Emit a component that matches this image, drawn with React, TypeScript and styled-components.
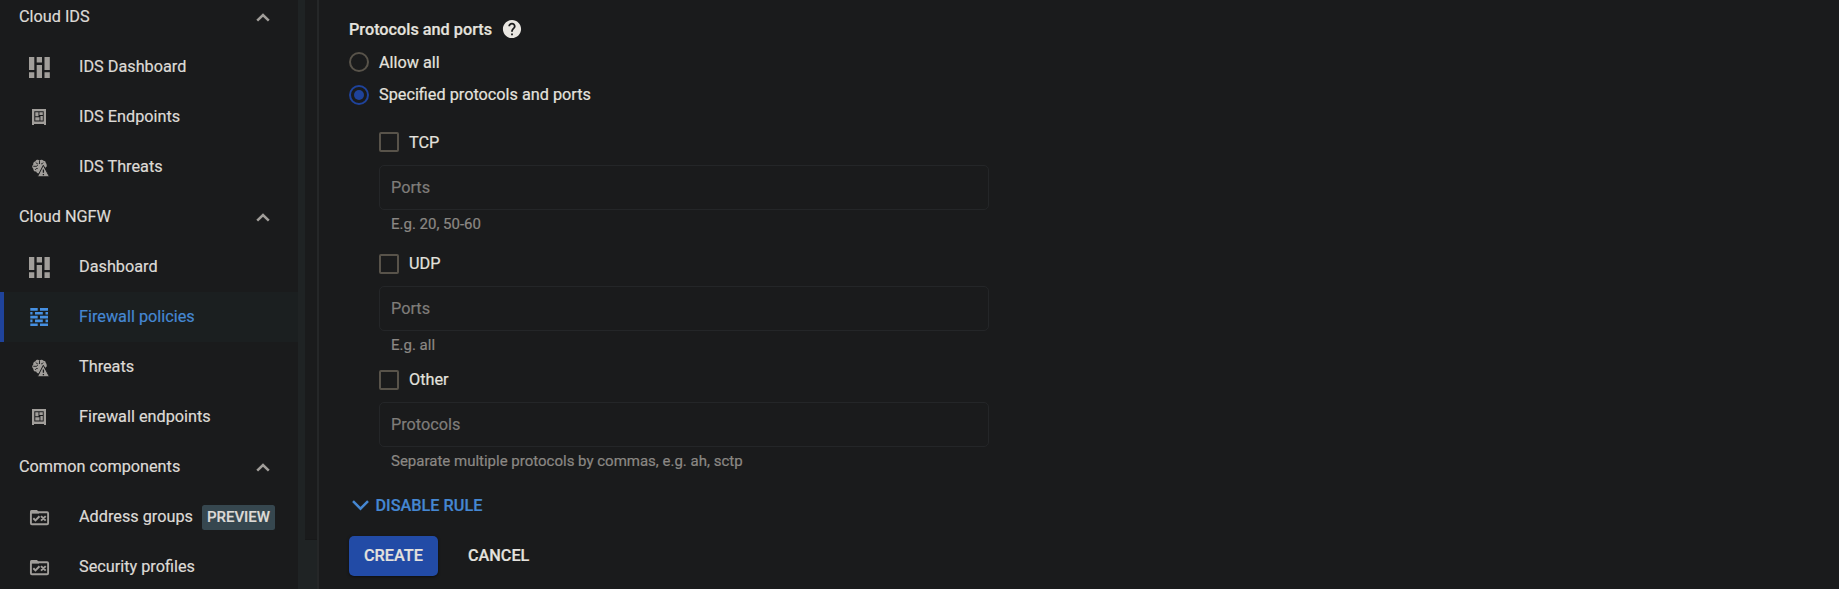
import React from "react";
import styled, { createGlobalStyle } from "styled-components";

const GlobalStyle = createGlobalStyle`
  * { box-sizing: border-box; }
  html, body { margin: 0; background: #1a1b1c; overflow: hidden; }
  button { font: inherit; }
`;

const Page = styled.div`
  display: flex;
  height: 589px;
  overflow: hidden;
  background: #1a1b1c;
  color: #e4e2de;
  font-family: Roboto, sans-serif;
  font-size: 16.25px;
  line-height: 20px;
  -webkit-text-stroke: 0.2px currentColor;
`;

const Sidebar = styled.nav`
  width: 298px;
  flex: none;
  margin-top: -8px;
`;

const SectionHeader = styled.div`
  display: flex;
  align-items: center;
  justify-content: space-between;
  height: 50px;
  padding: 0 28px 0 19px;
  color: #dddad6;
`;

const NavItem = styled.a<{ $active?: boolean }>`
  display: flex;
  align-items: center;
  height: 50px;
  padding-left: ${(p) => (p.$active ? 21 : 25)}px;
  border-left: ${(p) => (p.$active ? "4px solid #1f439b" : "0")};
  background: ${(p) => (p.$active ? "#1b1f20" : "transparent")};
  color: ${(p) => (p.$active ? "#4587d2" : "#dddad6")};
`;

const IconSlot = styled.span<{ $active?: boolean }>`
  display: flex;
  width: 28px;
  margin-right: 26px;
  color: ${(p) => (p.$active ? "#4690e2" : "#a19e9a")};
`;

const Badge = styled.span`
  height: 25px;
  margin-left: 9px;
  padding: 0 5px;
  border-radius: 2.5px;
  background: #36474f;
  font-size: 15px;
  line-height: 24px;
  font-weight: 500;
`;

const ScrollTrack = styled.div`
  flex: none;
  width: 21px;
  padding-left: 7px;
  border-right: 2px solid #252728;
  background: #1f2324;
`;

const ScrollThumb = styled.div`
  height: 540px;
  background: #1a1b1c;
  border-bottom: 1px solid #171819;
`;

const Content = styled.main`
  flex: 1;
  padding: 19px 0 0 30px;
`;

const Title = styled.div`
  display: flex;
  align-items: center;
  gap: 9.5px;
  height: 20px;
  font-weight: 500;
`;

const Option = styled.label<{ $top: number }>`
  display: flex;
  align-items: center;
  gap: 10px;
  height: 20px;
  margin-top: ${(p) => p.$top}px;
`;

const LowLabel = styled.span`
  padding-top: 2px;
`;

const Radio = styled.span<{ $checked?: boolean }>`
  display: flex;
  align-items: center;
  justify-content: center;
  width: 20px;
  height: 20px;
  border: 2px solid ${(p) => (p.$checked ? "#1f439b" : "#58534a")};
  border-radius: 50%;
  &::after {
    content: "";
    width: 10px;
    height: 10px;
    border-radius: 50%;
    background: ${(p) => (p.$checked ? "#1f439b" : "transparent")};
  }
`;

const Checkbox = styled.span`
  width: 20px;
  height: 20px;
  border: 2px solid #58534a;
  border-radius: 2px;
`;

const Group = styled.div`
  width: 610px;
  margin-left: 30px;
`;

const Field = styled.div<{ $gap: number }>`
  height: 45px;
  margin-top: ${(p) => p.$gap}px;
  padding: 0 11px;
  border: 1px solid #242628;
  border-radius: 5px;
  line-height: 43px;
  color: #7f7d7a;
`;

const Hint = styled.div`
  height: 20px;
  margin-top: 4px;
  padding-left: 12px;
  font-size: 15px;
  line-height: 20px;
  color: #8b8884;
`;

const Expander = styled.div`
  display: flex;
  align-items: center;
  gap: 7px;
  height: 20px;
  margin-top: 24px;
  padding-left: 2.5px;
  color: #4587d2;
  font-weight: 500;
`;

const Actions = styled.div`
  display: flex;
  margin-top: 21px;
`;

const Button = styled.button<{ $primary?: boolean }>`
  height: 40px;
  padding: 0 15px;
  border: 0;
  border-radius: 5px;
  font-weight: 500;
  color: #e4e2de;
  background: ${(p) => (p.$primary ? "#224ba6" : "transparent")};
  box-shadow: ${(p) => (p.$primary ? "0 1px 3px rgba(0,0,0,.5)" : "none")};
  & + & { margin-left: 15px; }
`;

const DashboardIcon = () => (
  <svg width="28" height="28" fill="currentColor">
    <path d="M4 4h5.3v13H4zM4 19.2h5.3V25H4zM11.7 4h5.3v5.5h-5.3zM11.7 12h5.3v13h-5.3zM19.5 4h5.3v13h-5.3zM19.5 19.2h5.3V25h-5.3z" />
  </svg>
);

const EndpointIcon = () => (
  <svg width="28" height="28" fill="currentColor">
    <path fillRule="evenodd" d="M7 6h14v16h-2v-1H9v1H7zM9.3 8.300v10.200h9.400V8.300z" />
    <path d="M10.300 9.300h3.200v4h-3.200zM14.400 9.300h3.400v2.800h-3.400zM10.300 14.300h4.200v3.200h-4.200zM15.400 13.100h2.400v4.400h-2.400z" />
  </svg>
);

const ThreatIcon = () => (
  <svg width="28" height="28">
    <path
      fill="currentColor"
      d="M14.500 7.600c-1-1.200-3.200-1.100-4 .6-1.700.2-2.600 1.800-2.200 3.200-1.500 1.200-1.500 3.200 0 4.300 0 2 1.300 3 2.800 2.900.6 1.800 2.400 2.400 3.400 1.200l7.200-6.300c.3-1.400-.2-3-.9-3.500-.1-1.500-1-2.300-2.300-2.200-.8-1.300-3-1.500-4-.2z"
    />
    <path
      fill="none"
      stroke="#1a1b1c"
      strokeWidth=".9"
      d="M14.500 7.500v3.500M11 9.500c.3 1.200 1.200 1.500 2.200 1.200M8.300 13.300h3.400l1-1.200M10.500 17c0-1.300 1-1.800 2.200-1.500M18.200 9.500c-.3 1.200-1.200 1.500-2.200 1.200"
    />
    <path fill="currentColor" stroke="#1a1b1c" strokeWidth="1" d="M18.300 12.300l6.200 11.500H12.400z" />
    <path stroke="#1a1b1c" strokeWidth="1.300" d="M18.400 16.500v3.200M18.400 20.900v1.300" />
  </svg>
);

const FirewallIcon = () => (
  <svg width="28" height="28" fill="currentColor">
    <path d="M5.300 5h7.400v2.700H5.300zM15 5h8v2.700h-8zM5.300 9h2.200v2.600H5.300zM10 9h7.800v2.600H10zM20.500 9H23v2.600h-2.500zM5.300 12.800h7.400v2.600H5.300zM15 12.800h8v2.600h-8zM5.300 16.600h2.200v2.600H5.300zM10 16.600h7.800v2.600H10zM20.500 16.600H23v2.600h-2.500zM5.300 20.400h7.400V23H5.300zM15 20.400h8V23h-8z" />
  </svg>
);

const FolderIcon = () => (
  <svg width="28" height="28" fill="none" stroke="currentColor">
    <rect x="5.900" y="9.300" width="17.200" height="12" rx="1" strokeWidth="1.900" />
    <path fill="currentColor" stroke="none" d="M5 10.500V8.500Q5 7 6.500 7H12l2 2.300v1.200z" />
    <path strokeWidth="2" d="M8.300 15.200l2.200 2.200 4-4.200M16 13.100l4.700 4.500M20.700 13.100L16 17.600" />
  </svg>
);

const ChevronUp = () => (
  <svg width="14" height="10" fill="none" stroke="#a19e9a" strokeWidth="2.500">
    <path d="M1.200 8.700L7 3l5.800 5.700" />
  </svg>
);

const ChevronDown = () => (
  <svg width="17" height="11" fill="none" stroke="#4587d2" strokeWidth="2.500">
    <path d="M1 1.200l7.500 7.500L16 1.200" />
  </svg>
);

const HelpIcon = () => (
  <svg width="20" height="20" viewBox="1 1 22 22">
    <path
      fill="#e9e6e1"
      d="M12 2C6.480 2 2 6.480 2 12s4.480 10 10 10 10-4.480 10-10S17.520 2 12 2zm1 17h-2v-2h2v2zm2.070-7.750l-.9.920C13.450 12.900 13 13.500 13 15h-2v-.5c0-1.100.45-2.100 1.170-2.830l1.240-1.260c.37-.36.59-.86.59-1.410 0-1.100-.9-2-2-2s-2 .9-2 2H8c0-2.210 1.790-4 4-4s4 1.790 4 4c0 .88-.36 1.680-.93 2.250z"
    />
  </svg>
);

type Item = { label: string; Icon: () => React.ReactElement; active?: boolean; badge?: string };

const sections: { title: string; items: Item[] }[] = [
  {
    title: "Cloud IDS",
    items: [
      { label: "IDS Dashboard", Icon: DashboardIcon },
      { label: "IDS Endpoints", Icon: EndpointIcon },
      { label: "IDS Threats", Icon: ThreatIcon },
    ],
  },
  {
    title: "Cloud NGFW",
    items: [
      { label: "Dashboard", Icon: DashboardIcon },
      { label: "Firewall policies", Icon: FirewallIcon, active: true },
      { label: "Threats", Icon: ThreatIcon },
      { label: "Firewall endpoints", Icon: EndpointIcon },
    ],
  },
  {
    title: "Common components",
    items: [
      { label: "Address groups", Icon: FolderIcon, badge: "PREVIEW" },
      { label: "Security profiles", Icon: FolderIcon },
    ],
  },
];

const protocols = [
  { name: "TCP", placeholder: "Ports", hint: "E.g. 20, 50-60", top: 27, gap: 13, Label: LowLabel },
  { name: "UDP", placeholder: "Ports", hint: "E.g. all", top: 20, gap: 12, Label: "span" as const },
  {
    name: "Other",
    placeholder: "Protocols",
    hint: "Separate multiple protocols by commas, e.g. ah, sctp",
    top: 15,
    gap: 12,
    Label: "span" as const,
  },
];

export default function App() {
  return (
    <Page>
      <GlobalStyle />
      <Sidebar>
        {sections.map((s) => (
          <React.Fragment key={s.title}>
            <SectionHeader>
              {s.title}
              <ChevronUp />
            </SectionHeader>
            {s.items.map(({ label, Icon, active, badge }) => (
              <NavItem key={label} $active={active}>
                <IconSlot $active={active}>
                  <Icon />
                </IconSlot>
                {label}
                {badge && <Badge>{badge}</Badge>}
              </NavItem>
            ))}
          </React.Fragment>
        ))}
      </Sidebar>
      <ScrollTrack>
        <ScrollThumb />
      </ScrollTrack>
      <Content>
        <Title>
          <LowLabel>Protocols and ports</LowLabel>
          <HelpIcon />
        </Title>
        <Option $top={13}>
          <Radio />
          <LowLabel>Allow all</LowLabel>
        </Option>
        <Option $top={13}>
          <Radio $checked />
          Specified protocols and ports
        </Option>
        <Group>
          {protocols.map(({ name, placeholder, hint, top, gap, Label }) => (
            <React.Fragment key={name}>
              <Option $top={top}>
                <Checkbox />
                <Label>{name}</Label>
              </Option>
              <Field $gap={gap}>{placeholder}</Field>
              <Hint>{hint}</Hint>
            </React.Fragment>
          ))}
        </Group>
        <Expander>
          <ChevronDown />
          <LowLabel>DISABLE RULE</LowLabel>
        </Expander>
        <Actions>
          <Button $primary>CREATE</Button>
          <Button>CANCEL</Button>
        </Actions>
      </Content>
    </Page>
  );
}
